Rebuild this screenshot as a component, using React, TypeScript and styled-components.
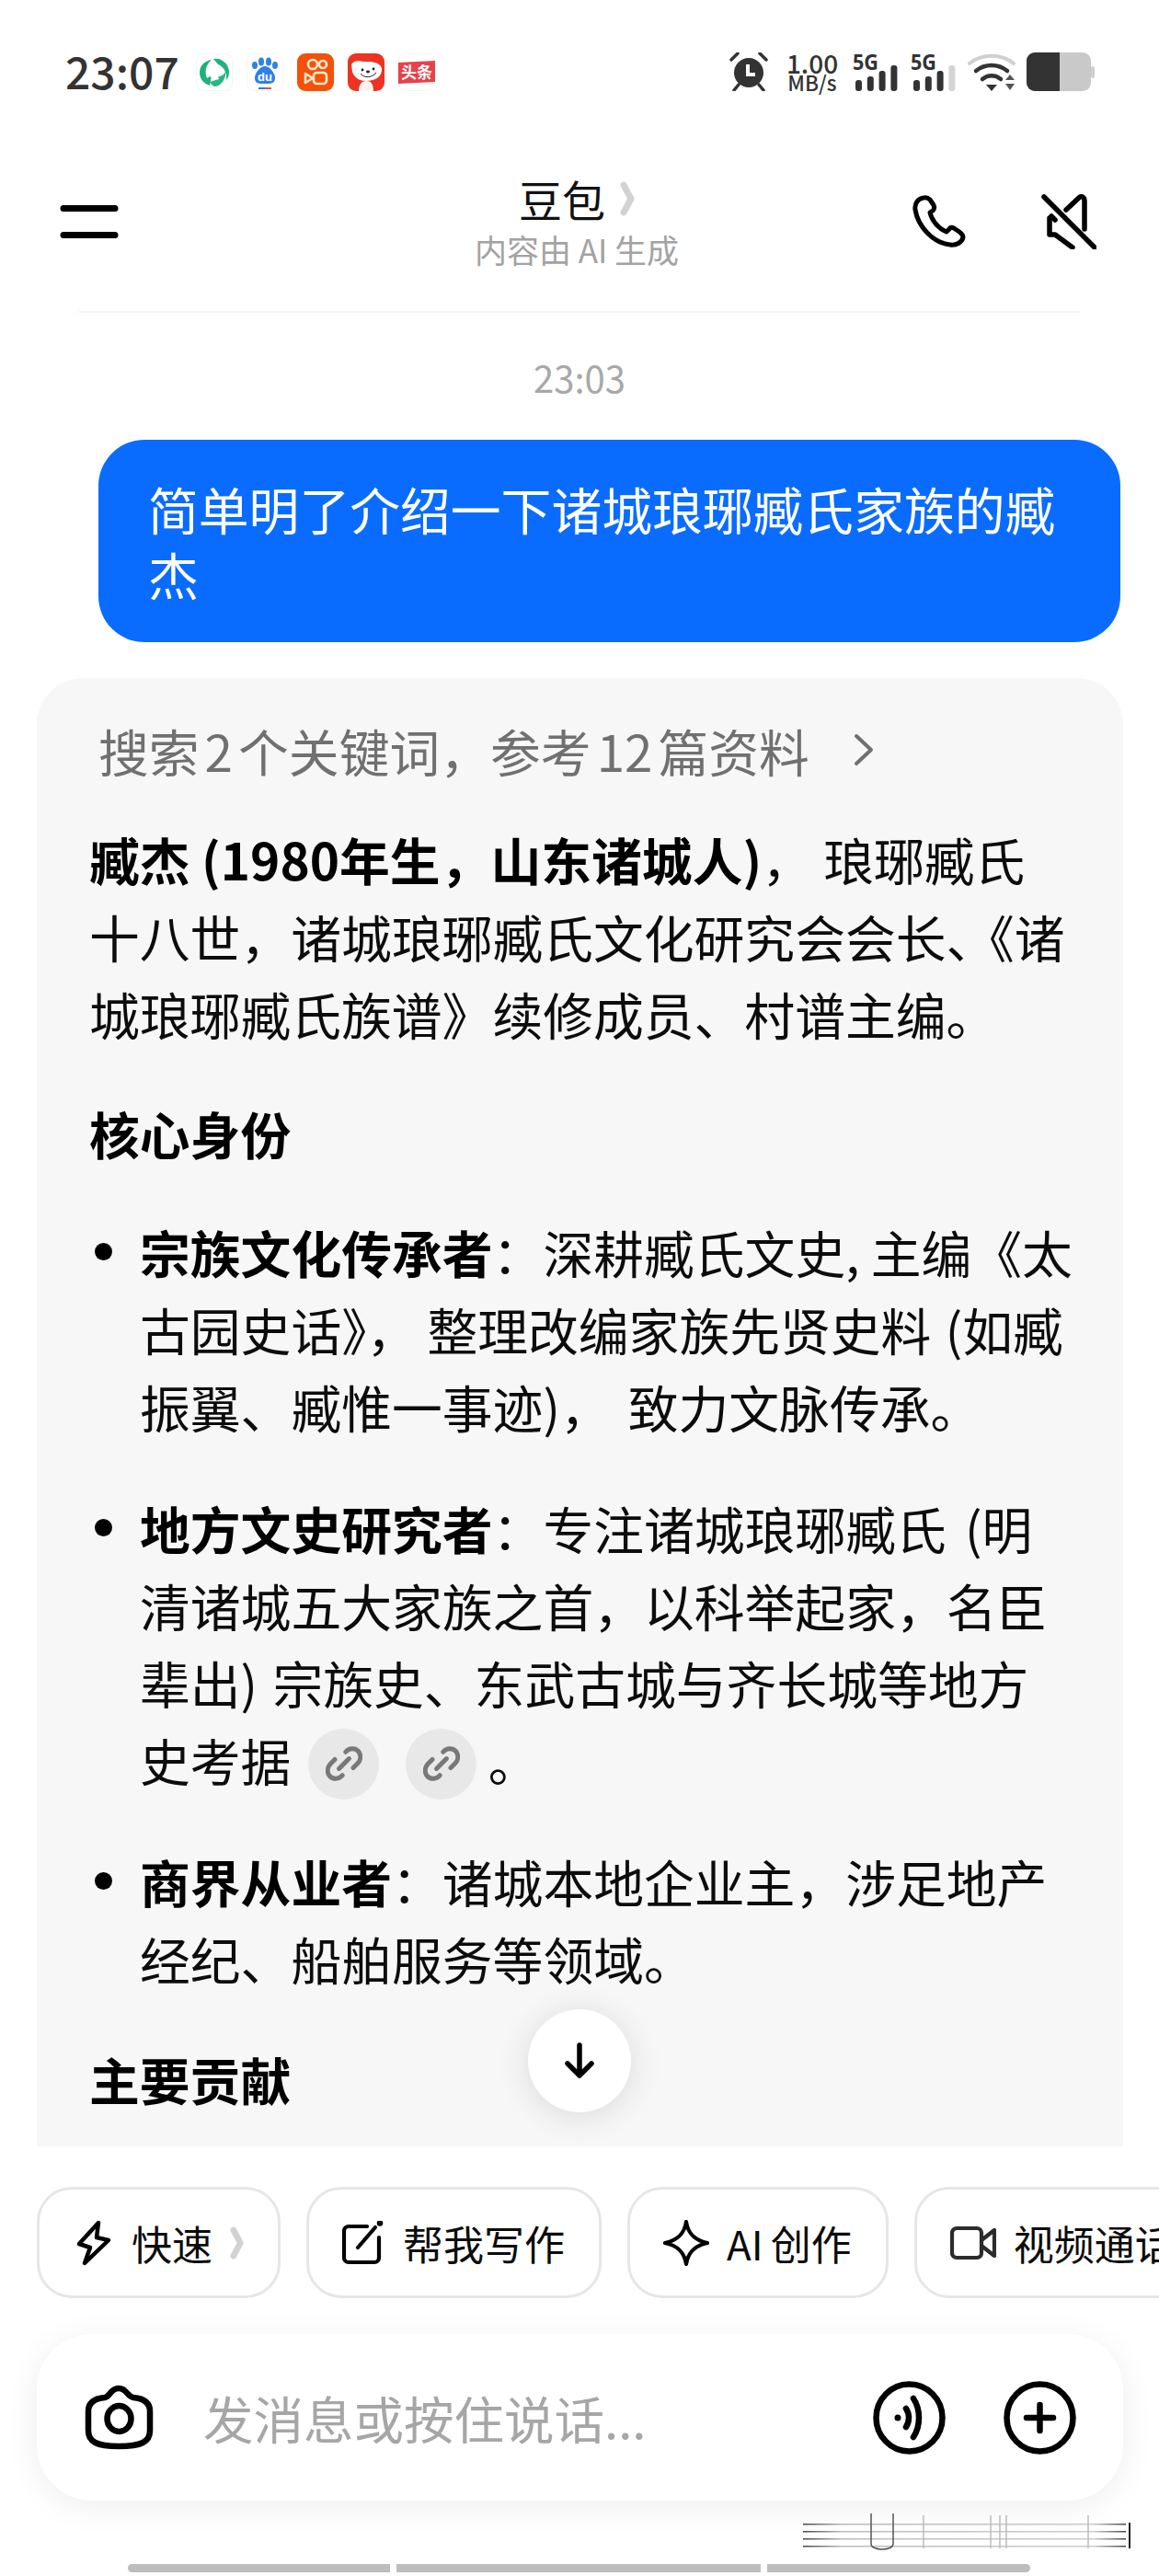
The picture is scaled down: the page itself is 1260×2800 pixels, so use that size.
import styled, { createGlobalStyle } from "styled-components";

const GlobalStyle = createGlobalStyle`
  html, body {
    margin: 0;
    padding: 0;
    background: #fff;
  }
  body {
    font-family: "Noto Sans CJK SC", "Noto Sans", sans-serif;
    color: #000;
  }
`;

const Page = styled.div`
  width: 1260px;
  height: 2800px;
  display: flex;
  flex-direction: column;
  overflow: hidden;
  background: #fff;
`;

const StatusBar = styled.div`
  display: flex;
  justify-content: space-between;
  align-items: center;
  height: 42px;
  padding: 57px 70px 0 71px;
`;

const StatusLeft = styled.div`
  display: flex;
  align-items: center;
`;

const Clock = styled.span`
  font-size: 48px;
  line-height: 42px;
  padding-bottom: 4px;
  font-weight: 500;
  color: #333;
  width: 142px;
`;

const AppIcons = styled.div`
  display: flex;
  gap: 15px;
`;

const StatusRight = styled.div`
  display: flex;
  align-items: center;
`;

const StatusGap = styled.div<{ $w: number }>`
  width: ${(p) => p.$w}px;
`;

const NetSpeed = styled.div`
  display: flex;
  flex-direction: column;
  align-items: center;
  width: 56px;
  margin: 0 16px 0 20px;
  color: #333;
  font-weight: 500;
`;

const NetValue = styled.span`
  font-size: 28px;
  line-height: 22px;
`;

const NetUnit = styled.span`
  font-size: 22.5px;
  line-height: 21px;
`;

const Header = styled.div`
  display: grid;
  grid-template-columns: 1fr auto 1fr;
  align-items: center;
  padding: 93px 68px 49px 65px;
`;

const HeaderCenter = styled.div`
  display: flex;
  flex-direction: column;
  align-items: center;
  margin-right: 3px;
`;

const TitleRow = styled.div`
  display: flex;
  align-items: center;
  gap: 16px;
`;

const Title = styled.span`
  font-size: 47px;
  line-height: 48px;
  color: #111;
`;

const Subtitle = styled.span`
  font-size: 35px;
  line-height: 36px;
  margin-top: 13px;
  color: #a3a3a3;
`;

const HeaderActions = styled.div`
  display: flex;
  justify-content: flex-end;
  align-items: center;
  gap: 82px;
`;

const Divider = styled.div`
  height: 2px;
  margin: 0 85px;
  background: #f6f6f6;
`;

const TimeStamp = styled.div`
  margin-top: 49px;
  height: 42px;
  text-align: center;
  font-size: 40px;
  line-height: 42px;
  color: #a8a8a8;
`;

const Bubble = styled.div`
  margin: 47px 42px 0 107px;
  padding: 39px 30px 39px 54px;
  border-radius: 50px;
  background: #0a6cff;
  color: #fff;
  font-size: 54.8px;
  line-height: 71px;
  white-space: nowrap;
`;

const Card = styled.div`
  position: relative;
  height: 1596px;
  margin: 39px 39px 0 40px;
  padding: 36px 30px 0 57px;
  box-sizing: border-box;
  flex: none;
  overflow: hidden;
  border-radius: 50px 50px 0 0;
  background: #f7f7f7;
  font-size: 54.8px;
  line-height: 84px;
  white-space: nowrap;
`;

const SearchRow = styled.div`
  display: flex;
  align-items: center;
  gap: 46px;
  margin: 0 0 34px 10px;
  color: #707070;
`;

const Num = styled.span`
  margin: 0 6px;
`;

// glyph widths of the original font differ a little from Noto, this evens them out
const Nudge = styled.span<{ $x: number }>`
  margin-left: ${(p) => p.$x}px;
`;

const Paragraph = styled.div`
  color: #0c0c0c;
`;

const Strong = styled.b`
  font-weight: 700;
  color: #000;
`;

const SectionTitle = styled.div<{ $top: number }>`
  margin-top: ${(p) => p.$top}px;
  font-weight: 700;
  color: #000;
`;

const BulletList = styled.ul`
  list-style: none;
  margin: 45px 0 0;
  padding: 0;
  display: flex;
  flex-direction: column;
  gap: 48px;
`;

const BulletItem = styled.li`
  position: relative;
  padding-left: 55px;
  color: #0c0c0c;

  &::before {
    content: "";
    position: absolute;
    left: 6px;
    top: 33px;
    width: 19px;
    height: 19px;
    border-radius: 50%;
    background: #000;
  }
`;

const LinkPill = styled.span`
  display: inline-flex;
  justify-content: center;
  align-items: center;
  width: 77px;
  height: 77px;
  margin: -12px 0 -12px 19px;
  vertical-align: -1px;
  border-radius: 50%;
  background: #e8e8e8;

  & + & {
    margin-left: 29px;
  }
`;

const DownButton = styled.div`
  position: absolute;
  left: 534px;
  bottom: 37px;
  width: 112px;
  height: 112px;
  display: flex;
  justify-content: center;
  align-items: center;
  border-radius: 50%;
  background: #fff;
  box-shadow: 0 4px 36px rgba(0, 0, 0, 0.12);
`;

const ChipRow = styled.div`
  display: flex;
  gap: 28px;
  margin-top: 44px;
  padding-left: 40px;
  overflow: hidden;
  flex: none;
`;

const Chip = styled.div`
  flex: none;
  height: 121px;
  box-sizing: border-box;
  display: flex;
  align-items: center;
  gap: 19px;
  padding: 0 37px 0 36px;
  border: 3px solid #e6e6e6;
  border-radius: 38px;
  background: #fff;
  font-size: 44px;
  color: #0c0c0c;
  white-space: nowrap;
`;

const ChipLatin = styled.span`
  margin-right: 8px;
`;

const InputBar = styled.div`
  flex: none;
  height: 181px;
  margin: 39px 39px 0 40px;
  padding: 0 51px 0 52px;
  box-sizing: border-box;
  display: flex;
  align-items: center;
  border-radius: 60px;
  background: #fff;
  box-shadow: 0 6px 36px rgba(0, 0, 0, 0.07);
`;

const Placeholder = styled.span`
  flex: 1;
  margin-left: 54px;
  font-size: 54.5px;
  color: #a6a6a6;
`;

const InputActions = styled.div`
  display: flex;
  gap: 63px;
`;

const Footer = styled.div`
  display: flex;
  flex-direction: column;
  padding-top: 14px;
`;

const ScanArtifact = styled.svg`
  display: block;
  margin-left: 870px;
`;

const ScrollTrack = styled.div`
  display: flex;
  gap: 7px;
  margin: 15px 0 0 139px;
`;

const ScrollPiece = styled.div<{ $w: number; $r?: string }>`
  width: ${(p) => p.$w}px;
  height: 9px;
  border-radius: ${(p) => p.$r || "0"};
  background: #bdbdbd;
`;

const Chevron = ({ h = 38 }: { h?: number }) => (
  <svg width={h * 0.42} height={h} viewBox="0 0 16 38" fill="none">
    <path d="M4 4 L12 19 L4 34" stroke="#d2d2d2" strokeWidth="7" strokeLinecap="round" strokeLinejoin="round" />
  </svg>
);

const GreenIcon = () => (
  <svg width="40" height="41" viewBox="0 0 40 41">
    <rect x="0.5" y="0.5" width="39" height="40" rx="8" fill="#fff" stroke="#f2f5f4" />
    <path d="M19 6 C27 4 36 11 36 20 C36 24 35 27 33 29 C34 21 30 14 24 12 Z" fill="#22b37e" />
    <path d="M4 21 C4 14 9 8 17 7 C11 12 9 20 12 27 L17 24 L15 35 C9 33 4 28 4 21 Z" fill="#1fb07b" />
    <path d="M15 31 L25 28 L24 25 C27 25 31 23 32 20 C33 28 27 36 20 36 C18 35 16 33 15 31 Z" fill="#27b883" />
    <circle cx="20" cy="20" r="7" fill="#fff" />
  </svg>
);

const BaiduIcon = () => (
  <svg width="40" height="41" viewBox="0 0 40 41">
    <rect x="0.5" y="0.5" width="39" height="40" rx="8" fill="#fff" stroke="#f3f4f6" />
    <g fill="#2f80e7">
      <ellipse cx="9" cy="13" rx="3" ry="4" />
      <ellipse cx="16" cy="9" rx="3" ry="4.5" />
      <ellipse cx="24" cy="9" rx="3" ry="4.5" />
      <ellipse cx="31" cy="13" rx="3" ry="4" />
      <path d="M20 14 C25 14 32 22 31 28 C30 33 26 33 20 33 C14 33 10 33 9 28 C8 22 15 14 20 14 Z" />
    </g>
    <text x="20" y="30" textAnchor="middle" fontSize="13" fontWeight="700" fill="#fff" fontFamily="Liberation Sans, sans-serif">
      du
    </text>
    <rect x="13" y="37" width="7" height="2" fill="#3478e0" />
    <rect x="20" y="37" width="7" height="2" fill="#d9534f" />
  </svg>
);

const KuaishouIcon = () => (
  <svg width="40" height="41" viewBox="0 0 40 41">
    <rect width="40" height="41" rx="9" fill="#f4510b" />
    <g fill="none" stroke="#ffe9c8" strokeWidth="2.6">
      <circle cx="17" cy="12" r="5" />
      <circle cx="28" cy="12" r="4" />
      <rect x="18" y="21" width="14" height="12" rx="3.5" />
      <path d="M17 27 L9 22 V32 Z" strokeLinejoin="round" />
    </g>
  </svg>
);

const JdIcon = () => (
  <svg width="40" height="41" viewBox="0 0 40 41">
    <rect width="40" height="41" rx="9" fill="#ee3322" />
    <path d="M4 12 C8 6 14 9 20 9 C28 9 35 10 37 16 C38 25 30 30 20 30 C12 30 7 26 5 20 Z" fill="#fff" />
    <path d="M12 41 C12 33 16 30 20 30 C25 30 28 33 28 41 Z" fill="#fdf3ee" />
    <circle cx="16" cy="18" r="1.4" fill="#222" />
    <circle cx="28" cy="17" r="1.4" fill="#222" />
    <ellipse cx="22" cy="20" rx="2" ry="1.4" fill="#222" />
    <path d="M14 22 C18 27 26 27 31 21" stroke="#222" strokeWidth="1" fill="none" />
  </svg>
);

const ToutiaoIcon = () => (
  <svg width="40" height="41" viewBox="0 0 40 41">
    <rect x="0.5" y="0.5" width="39" height="40" rx="8" fill="#fff" stroke="#f5f5f5" />
    <path d="M0 10 L40 8 V31 L0 33 Z" fill="#e8414a" />
    <text x="20" y="27" textAnchor="middle" fontSize="17" fontWeight="700" fill="#fff" fontFamily="Noto Sans CJK SC, sans-serif">
      头条
    </text>
  </svg>
);

const AlarmIcon = () => (
  <svg width="42" height="42" viewBox="0 0 42 42">
    <circle cx="21" cy="22" r="16" fill="#333" />
    <path d="M2 8 L9 1 M40 8 L33 1 M5 41 L10 35 M37 41 L32 35" stroke="#333" strokeWidth="3.5" strokeLinecap="round" />
    <path d="M20 13 V24 H28" stroke="#fff" strokeWidth="4" fill="none" />
  </svg>
);

const SignalIcon = ({ level }: { level: number }) => (
  <svg width="50" height="42" viewBox="0 0 50 42">
    <text x="0" y="19" fontSize="24" fontWeight="700" fill="#333" fontFamily="Noto Sans, sans-serif" textLength="28" lengthAdjust="spacingAndGlyphs">
      5G
    </text>
    {[0, 1, 2, 3].map((i) => {
      const h = [12, 16, 22, 28][i];
      return <rect key={i} x={3 + i * 12.8} y={42 - h} width="7" height={h} rx="3" fill={i < level ? "#333" : "#d4d4d4"} />;
    })}
  </svg>
);

const WifiIcon = () => (
  <svg width="53" height="42" viewBox="0 0 53 42" fill="none">
    <path d="M2 12 C15 1 37 1 50 12" stroke="#d0d0d0" strokeWidth="4" strokeLinecap="round" />
    <path d="M9 20 C19 12 33 12 43 20" stroke="#333" strokeWidth="4.5" strokeLinecap="round" />
    <path d="M16 29 C22 24 30 24 36 29" stroke="#333" strokeWidth="4.5" strokeLinecap="round" />
    <path d="M20 35 H32 L26 42 Z" fill="#333" />
    <path d="M41 30 L46 24 L51 30 Z M41 34 H51 L46 41 Z" fill="#555" />
  </svg>
);

const BatteryIcon = () => (
  <svg width="74" height="42" viewBox="0 0 74 42">
    <rect x="70" y="15" width="4" height="13" rx="2" fill="#cfcfcf" />
    <rect width="70" height="42" rx="9" fill="#c9c9c9" />
    <path d="M9 0 H36 V42 H9 A9 9 0 0 1 0 33 V9 A9 9 0 0 1 9 0 Z" fill="#333" />
  </svg>
);

const MenuIcon = () => (
  <svg width="64" height="36" viewBox="0 0 64 36" stroke="#000" strokeWidth="7" strokeLinecap="round">
    <path d="M4 3.5 H60 M4 32.5 H60" />
  </svg>
);

const PhoneIcon = () => (
  <svg width="58" height="57" viewBox="0 0 58 57" fill="none">
    <path
      d="M12 3 C6 4 2 9 3 16 C6 34 22 52 41 54 C48 55 54 51 55 46 C55 43 53 42 51 40 L45 36 C43 35 41 35 40 37 L37 40 C29 37 21 28 19 19 L22 17 C24 15 24 13 23 11 L19 5 C17 3 15 2 12 3 Z"
      stroke="#000"
      strokeWidth="5"
      strokeLinejoin="round"
    />
  </svg>
);

const MuteIcon = () => (
  <svg width="60" height="60" viewBox="0 0 60 60" fill="none" stroke="#000" strokeWidth="5.5" strokeLinecap="round" strokeLinejoin="round">
    <path d="M3 3 L58 58" />
    <path d="M27 17 L42 3 C45 2 47 4 47 7 V38" />
    <path d="M9 26 V44 H15 L34 58" />
    <path d="M15 28 L11 24" />
  </svg>
);

const LinkGlyph = () => (
  <svg width="40" height="40" viewBox="0 0 44 44" fill="none" stroke="#787878" strokeWidth="5.5" strokeLinecap="round">
    <path d="M24 8 C28 3 35 3 39 7 C43 12 42 18 38 22 L33 27" />
    <path d="M20 36 C16 41 9 41 5 37 C1 32 2 26 6 22 L11 17" />
    <path d="M16 28 L28 16" />
  </svg>
);

const ArrowDown = () => (
  <svg width="40" height="40" viewBox="0 0 40 40" fill="none" stroke="#000" strokeWidth="5.5" strokeLinecap="round" strokeLinejoin="round">
    <path d="M20 3 V36 M7 23 L20 36 L33 23" />
  </svg>
);

const BoltIcon = () => (
  <svg width="45" height="50" viewBox="-4 0 45 50" fill="none" stroke="#000" strokeWidth="4.5" strokeLinejoin="round">
    <path d="M24 3 L3 26 L15 30 L9 47 L35 22 L22 19 Z" />
  </svg>
);

const EditIcon = () => (
  <svg width="47" height="48" viewBox="0 0 47 48" fill="none" stroke="#000" strokeWidth="4.2" strokeLinecap="round">
    <path d="M27 6 H7 A5 5 0 0 0 2 11 V40 A5 5 0 0 0 7 45 H35 A5 5 0 0 0 40 40 V18" />
    <path d="M17 29 L36 7" />
    <circle cx="41" cy="2.5" r="1.2" fill="#000" />
  </svg>
);

const SparkIcon = () => (
  <svg width="50" height="50" viewBox="0 0 50 50" fill="none" stroke="#000" strokeWidth="4.2" strokeLinejoin="round">
    <path d="M25 2 C27 15 34 22 48 25 C34 28 27 35 25 48 C23 35 16 28 2 25 C16 22 23 15 25 2 Z" />
  </svg>
);

const VideoIcon = () => (
  <svg width="50" height="38" viewBox="0 0 50 38" fill="none" stroke="#2c2c2c" strokeWidth="4.2" strokeLinejoin="round">
    <rect x="2" y="3" width="32" height="32" rx="5" />
    <path d="M34 16 L48 5 V33 L34 22" />
  </svg>
);

const CameraIcon = () => (
  <svg width="75" height="71" viewBox="0 0 75 71" fill="none" stroke="#000" strokeWidth="6.5">
    <path d="M22 14 C28 13 28 4 37 4 C46 4 46 13 53 14 C64 15 71 19 71 29 V50 C71 62 62 67 37 67 C13 67 4 62 4 50 V29 C4 19 11 15 22 14 Z" />
    <ellipse cx="37.5" cy="37" rx="13" ry="14" />
  </svg>
);

const VoiceIcon = () => (
  <svg width="79" height="80" viewBox="0 0 79 80" fill="none" stroke="#000" strokeWidth="6.5" strokeLinecap="round">
    <ellipse cx="39.5" cy="40" rx="36" ry="36.5" />
    <circle cx="27" cy="40" r="2.5" fill="#000" strokeWidth="2" />
    <path d="M36 30 C40 36 40 44 36 50" />
    <path d="M44 19 C52 31 52 49 44 61" />
  </svg>
);

const PlusCircleIcon = () => (
  <svg width="79" height="80" viewBox="0 0 79 80" fill="none" stroke="#000" strokeWidth="6.5" strokeLinecap="round">
    <ellipse cx="39.5" cy="40" rx="36" ry="36.5" />
    <path d="M39.5 26 V54 M25 40 H54" />
  </svg>
);

const artifactRows = [11, 19, 27, 35];
const artifactCols = [134, 207, 217, 224, 313];

const App = () => {
  return (
    <Page>
      <GlobalStyle />

      <StatusBar>
        <StatusLeft>
          <Clock>23:07</Clock>
          <AppIcons>
            <GreenIcon />
            <BaiduIcon />
            <KuaishouIcon />
            <JdIcon />
            <ToutiaoIcon />
          </AppIcons>
        </StatusLeft>
        <StatusRight>
          <AlarmIcon />
          <NetSpeed>
            <NetValue>1.00</NetValue>
            <NetUnit>MB/s</NetUnit>
          </NetSpeed>
          <SignalIcon level={4} />
          <StatusGap $w={13} />
          <SignalIcon level={3} />
          <StatusGap $w={12} />
          <WifiIcon />
          <StatusGap $w={11} />
          <BatteryIcon />
        </StatusRight>
      </StatusBar>

      <Header>
        <MenuIcon />
        <HeaderCenter>
          <TitleRow>
            <Title>豆包</Title>
            <Chevron />
          </TitleRow>
          <Subtitle>内容由 AI 生成</Subtitle>
        </HeaderCenter>
        <HeaderActions>
          <PhoneIcon />
          <MuteIcon />
        </HeaderActions>
      </Header>
      <Divider />

      <TimeStamp>23:03</TimeStamp>

      <Bubble>
        简单明了介绍一下诸城琅琊臧氏家族的臧
        <br />杰
      </Bubble>

      <Card>
        <SearchRow>
          <span>
            搜索<Num>2</Num>个关键词，参考<Num>12</Num>篇资料
          </span>
          <svg width="26" height="38" viewBox="0 0 26 38" fill="none" stroke="#707070" strokeWidth="4" strokeLinecap="round" strokeLinejoin="round">
            <path d="M5 4 L21 19 L5 34" />
          </svg>
        </SearchRow>

        <Paragraph>
          <Strong>臧杰 (1980年生，山东诸城人)</Strong>， 琅琊臧氏
          <br />
          十八世，诸城琅琊臧氏文化研究会会长、<Nudge $x={-8}>《诸</Nudge>
          <br />
          城琅琊臧氏族谱》续修成员、村谱主编。
        </Paragraph>

        <SectionTitle $top={46}>核心身份</SectionTitle>

        <BulletList>
          <BulletItem>
            <Strong>宗族文化传承者</Strong>：深耕臧氏文史, 主编《太
            <br />
            古园史话》，<Nudge $x={11}>整</Nudge>理改编家族先贤史料<Nudge $x={3}> (</Nudge>如臧
            <br />
            振翼、臧惟一事迹)，<Nudge $x={19}>致</Nudge>力文脉传承。
          </BulletItem>
          <BulletItem>
            <Strong>地方文史研究者</Strong>：专注诸城琅琊臧氏<Nudge $x={8}> (</Nudge>明
            <br />
            清诸城五大家族之首，以科举起家，名臣
            <br />
            辈出)<Nudge $x={4}> </Nudge>宗族史、东武古城与齐长城等地方
            <br />
            史考据
            <LinkPill>
              <LinkGlyph />
            </LinkPill>
            <LinkPill>
              <LinkGlyph />
            </LinkPill>{" "}
            。
          </BulletItem>
          <BulletItem>
            <Strong>商界从业者</Strong>：诸城本地企业主，涉足地产
            <br />
            经纪、船舶服务等领域。
          </BulletItem>
        </BulletList>

        <SectionTitle $top={47}>主要贡献</SectionTitle>

        <DownButton>
          <ArrowDown />
        </DownButton>
      </Card>

      <ChipRow>
        <Chip>
          <BoltIcon />
          快速
          <Chevron h={36} />
        </Chip>
        <Chip>
          <EditIcon />
          帮我写作
        </Chip>
        <Chip>
          <SparkIcon />
          <span>
            <ChipLatin>AI</ChipLatin>创作
          </span>
        </Chip>
        <Chip>
          <VideoIcon />
          视频通话
        </Chip>
      </ChipRow>

      <InputBar>
        <CameraIcon />
        <Placeholder>发消息或按住说话...</Placeholder>
        <InputActions>
          <VoiceIcon />
          <PlusCircleIcon />
        </InputActions>
      </InputBar>

      <Footer>
        <ScanArtifact width="360" height="40" viewBox="0 0 360 40" fill="none">
          <defs>
            <linearGradient id="scanRow" x1="0" x2="1" y1="0" y2="0">
              <stop offset="0" stopColor="#444" />
              <stop offset="0.12" stopColor="#bbb" />
              <stop offset="0.9" stopColor="#ccc" />
              <stop offset="1" stopColor="#444" />
            </linearGradient>
          </defs>
          {artifactRows.map((y) => (
            <rect key={y} x="3" y={y} width="351" height="1.5" fill="url(#scanRow)" />
          ))}
          {artifactCols.map((x) => (
            <path key={x} d={`M${x} 2 V38`} stroke="#bbb" strokeWidth="1.5" />
          ))}
          <path d="M77 0 V33 C77 41 101 41 101 33 V0" stroke="#555" strokeWidth="1.5" />
          <path d="M358 10 V38" stroke="#222" strokeWidth="2" />
        </ScanArtifact>
        <ScrollTrack>
          <ScrollPiece $w={285} $r="5px 0 0 5px" />
          <ScrollPiece $w={396} />
          <ScrollPiece $w={286} $r="0 5px 5px 0" />
        </ScrollTrack>
      </Footer>
    </Page>
  );
};

export default App;
